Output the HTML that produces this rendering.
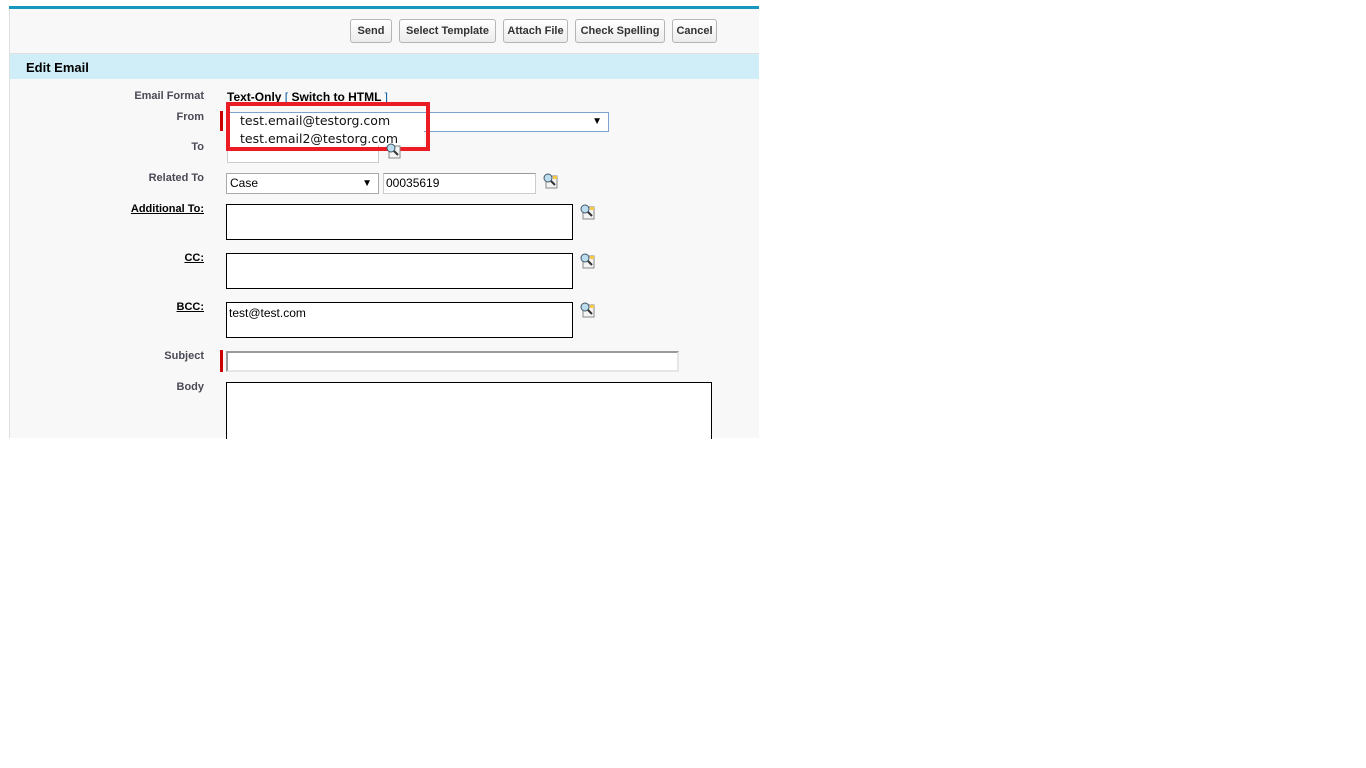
<!DOCTYPE html>
<html><head><meta charset="utf-8"><style>
body{margin:0;width:1366px;height:768px;background:#fff;font-family:"Liberation Sans",Arial,sans-serif;position:relative;overflow:hidden}
.a{position:absolute}
.panel{left:9px;top:6px;width:750px;height:432px;background:#f8f8f8;border-left:1px solid #e0e0e0;box-sizing:border-box}
.topbar{left:9px;top:6px;width:750px;height:3px;background:#1797c0}
.btn{top:19px;height:24px;border:1px solid #b5b5b5;border-radius:3px;background:linear-gradient(#fff,#ececec);font-size:11px;font-weight:bold;color:#333;box-sizing:border-box;text-align:center;line-height:23px}
.hdr{left:10px;top:53px;width:749px;height:26px;background:#cfeef8;border-top:1px solid #e0e0e0;box-sizing:border-box}
.lbl{right:1162px;font-size:11px;font-weight:bold;color:#4a4a56;text-align:right}
.u{color:#000;text-decoration:underline}
.ta{border:1px solid #000;background:#fff;box-sizing:border-box}
.inp{background:#fff;border:1px solid #ccc;border-top-color:#999;box-sizing:border-box;font-size:12px;line-height:19px;padding-left:2px}
.sel{background:#fff;border:1px solid #aaa;box-sizing:border-box;font-size:12px;line-height:19px;padding-left:3px}
</style></head><body>
<div class="a panel"></div>
<div class="a topbar"></div>
<div class="a btn" style="left:350px;width:42px">Send</div>
<div class="a btn" style="left:399px;width:97px">Select Template</div>
<div class="a btn" style="left:503px;width:65px">Attach File</div>
<div class="a btn" style="left:575px;width:90px">Check Spelling</div>
<div class="a btn" style="left:672px;width:45px">Cancel</div>
<div class="a hdr"><span class="a" style="left:16px;top:6px;font-size:13px;font-weight:bold;color:#000">Edit Email</span></div>

<div class="a lbl" style="top:90px">Email Format</div>
<div class="a" style="left:227px;top:90px;font-size:12px;font-weight:bold;color:#000">Text-Only <span style="color:#015ba7;font-weight:normal">[</span> Switch to HTML <span style="color:#015ba7;font-weight:normal">]</span></div>
<div class="a lbl" style="top:111px">From</div>
<div class="a" style="left:220px;top:111px;width:3px;height:20px;background:#c00"></div>
<div class="a" style="left:228px;top:112px;width:381px;height:20px;background:#fff;border:1px solid #7da2ce;box-sizing:border-box"><span class="a" style="right:6px;top:3px;font-size:10px">▼</span></div>
<div class="a lbl" style="top:141px">To</div>
<div class="a inp" style="left:227px;top:142px;width:152px;height:21px"></div>
<div class="a" style="left:228px;top:131px;width:196px;height:14px;background:#fff"></div>
<div class="a" style="left:240px;top:113px;font-family:'DejaVu Sans',sans-serif;font-size:12.5px;color:#111">test.email@testorg.com</div>
<div class="a" style="left:240px;top:131px;font-family:'DejaVu Sans',sans-serif;font-size:12.5px;color:#111">test.email2@testorg.com</div>
<div class="a" style="left:226px;top:102px;width:204px;height:49px;border:4px solid #ec1c24;box-sizing:border-box"></div>

<div class="a lbl" style="top:172px">Related To</div>
<div class="a sel" style="left:226px;top:173px;width:153px;height:21px">Case<span class="a" style="right:6px;top:0;font-size:10px">▼</span></div>
<div class="a inp" style="left:383px;top:173px;width:153px;height:21px">00035619</div>

<div class="a lbl" style="top:203px"><span class="u">Additional To:</span></div>
<div class="a ta" style="left:226px;top:204px;width:347px;height:36px"></div>
<div class="a lbl" style="top:252px"><span class="u">CC:</span></div>
<div class="a ta" style="left:226px;top:253px;width:347px;height:36px"></div>
<div class="a lbl" style="top:301px"><span class="u">BCC:</span></div>
<div class="a ta" style="left:226px;top:302px;width:347px;height:36px;font-size:12px;padding:3px 2px">test@test.com</div>
<div class="a lbl" style="top:350px">Subject</div>
<div class="a" style="left:220px;top:350px;width:3px;height:22px;background:#c00"></div>
<div class="a" style="left:226px;top:351px;width:453px;height:21px;background:#fff;border:2px solid #9a9a9a;border-right-color:#e6e6e6;border-bottom-color:#e6e6e6;box-sizing:border-box"></div>
<div class="a lbl" style="top:381px">Body</div>
<div class="a ta" style="left:226px;top:382px;width:486px;height:60px"></div>
<div class="a" style="left:0;top:439px;width:1366px;height:329px;background:#fff"></div>

<svg class="a" style="left:385px;top:143px" width="16" height="16"><rect x="4" y="3" width="11" height="12" fill="#f4f4f4" stroke="#888"/><circle cx="6" cy="5" r="4" fill="#bde" stroke="#456"/><path d="M9 8l4 4" stroke="#333" stroke-width="2"/></svg>
<svg class="a" style="left:542px;top:173px" width="16" height="16"><rect x="4" y="3" width="11" height="12" fill="#f4f4f4" stroke="#888"/><rect x="11" y="3" width="4" height="3" fill="#f7c948"/><circle cx="6" cy="5" r="4" fill="#bde" stroke="#456"/><path d="M9 8l4 4" stroke="#333" stroke-width="2"/></svg>
<svg class="a" style="left:579px;top:204px" width="16" height="16"><rect x="4" y="3" width="11" height="12" fill="#f4f4f4" stroke="#888"/><rect x="11" y="3" width="4" height="3" fill="#f7c948"/><circle cx="6" cy="5" r="4" fill="#bde" stroke="#456"/><path d="M9 8l4 4" stroke="#333" stroke-width="2"/></svg>
<svg class="a" style="left:579px;top:253px" width="16" height="16"><rect x="4" y="3" width="11" height="12" fill="#f4f4f4" stroke="#888"/><rect x="11" y="3" width="4" height="3" fill="#f7c948"/><circle cx="6" cy="5" r="4" fill="#bde" stroke="#456"/><path d="M9 8l4 4" stroke="#333" stroke-width="2"/></svg>
<svg class="a" style="left:579px;top:302px" width="16" height="16"><rect x="4" y="3" width="11" height="12" fill="#f4f4f4" stroke="#888"/><rect x="11" y="3" width="4" height="3" fill="#f7c948"/><circle cx="6" cy="5" r="4" fill="#bde" stroke="#456"/><path d="M9 8l4 4" stroke="#333" stroke-width="2"/></svg>
</body></html>
